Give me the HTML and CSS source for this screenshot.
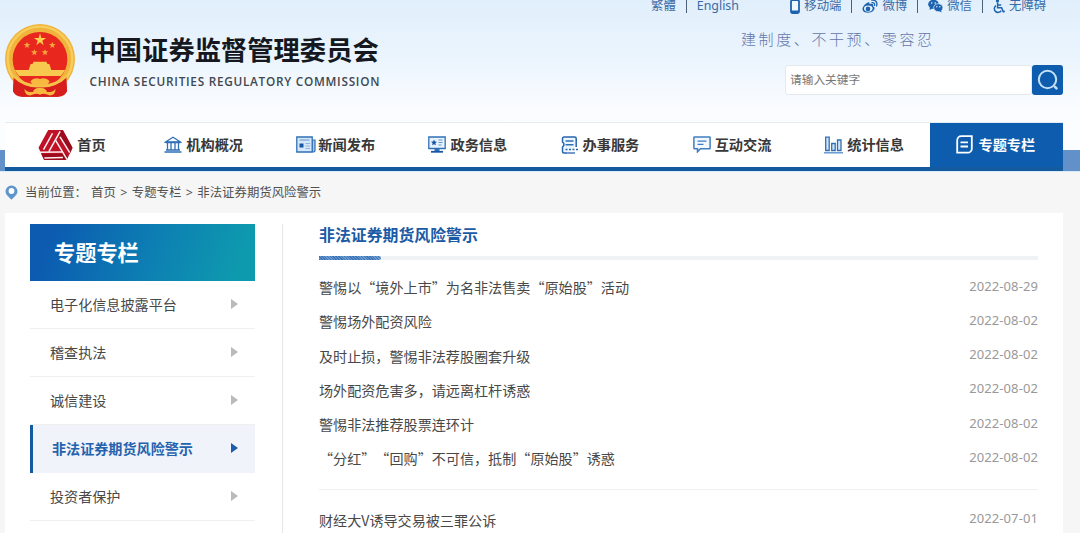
FILE: index.html
```html
<!DOCTYPE html>
<html lang="zh-CN">

<head>
    <meta charset="utf-8">
    <title>中国证券监督管理委员会</title>
    <link rel="stylesheet" href="styles.css">
</head>

<body>

    <div class="header">
        <div class="brand">
            <svg class="emblem" viewBox="0 0 210 222">
                <path d="M27 160 L24 203 L50 218 L160 218 L186 203 L183 160 Z" fill="#d61f1c"/>
                <circle cx="105" cy="105" r="105" fill="#f0b43c"/>
                <circle cx="105" cy="105" r="97" fill="none" stroke="#f8cd5b" stroke-width="7"/>
                <circle cx="105" cy="106" r="82" fill="#e8271f"/>
                <path d="M26 158 Q60 194 105 190 Q150 194 184 158 L186 200 Q182 216 160 218 L50 218 Q28 216 24 200 Z" fill="#d61f1c"/>
                <path d="M29 138 H181 L168 156 H42 Z M77 120 H133 L139 138 H71 Z M86 113 H124 L128 121 H82 Z" fill="#f7c94f"/>
                <path d="M105 28 L109 42 L123 42 L112 50 L116 64 L105 55 L94 64 L98 50 L87 42 L101 42 Z" fill="#f9cf4d"/>
                <path id="star" d="M66 54 L69 60 L76 60 L70 65 L72 72 L66 68 L60 72 L62 65 L56 60 L63 60 Z" fill="#f3a53b"/>
                <use href="#star" x="76"/>
                <use href="#star" x="22" y="22"/>
                <use href="#star" x="54" y="22"/>
                <path d="M26 156 Q55 186 105 186 Q155 186 184 156" fill="none" stroke="#f5c04a" stroke-width="8"/>
                <path d="M76 172 Q88 158 105 165 Q122 158 134 172 L126 184 H84 Z M58 194 Q66 206 84 204 Q88 190 105 192 Q122 190 126 204 Q144 206 152 194 Q150 216 132 214 Q118 206 105 212 Q92 206 78 214 Q60 216 58 194 Z" fill="#f7b93f"/>
            </svg>
            <div class="brand-text">
                <div class="brand-cn">中国证券监督管理委员会</div>
                <div class="brand-en">CHINA SECURITIES REGULATORY COMMISSION</div>
            </div>
        </div>
        <div class="tools">
            <div class="top-links">
                <a>繁體</a>
                <i class="bar"></i>
                <a class="english">English</a>
                <a>
                    <svg width="10" height="15" viewBox="0 0 10 15"><rect x="1" y="1" width="8" height="13" rx="1.5" fill="#eef6fe" stroke="#1c62ae" stroke-width="1.8"/><path d="M1 12.500h8" stroke="#1c62ae" stroke-width="2"/></svg>
                    移动端</a>
                <i class="bar"></i>
                <a>
                    <svg width="16" height="15" viewBox="0 0 16 15"><path d="M6 3.500C7.500 3 7.800 4 7.400 5.200C10 4.200 11.800 5 11 7.200C13 7.800 13 9.800 11.500 11.500C9 14.800 1 14.500 .5 10.500C.3 8 3 4.600 6 3.500Z" fill="#1c62ae"/><ellipse cx="6.300" cy="9.600" rx="4.300" ry="3.100" fill="#e9f3fd"/><circle cx="6" cy="9.900" r="2.300" fill="#1c62ae"/><path d="M9.800 1.200C13.500 .5 15.800 3.400 14.500 7M10 3.700C12 3.300 13 4.800 12.400 6.400" fill="none" stroke="#1c62ae" stroke-width="1.300" stroke-linecap="round"/></svg>
                    微博</a>
                <i class="bar"></i>
                <a>
                    <svg width="15" height="14" viewBox="0 0 15 14"><ellipse cx="5.500" cy="5.300" rx="5.300" ry="4.600" fill="#1c62ae"/><path d="M2 8l-.5 3 3-1.600z" fill="#1c62ae"/><ellipse cx="10.300" cy="8.700" rx="4.600" ry="4" fill="#1c62ae" stroke="#e9f3fd" stroke-width=".7"/><path d="M11 12l2.500 1.600-.4-2.600z" fill="#1c62ae"/><g fill="#e9f3fd"><circle cx="3.700" cy="4" r=".8"/><circle cx="7.200" cy="4" r=".8"/><circle cx="8.800" cy="7.700" r=".7"/><circle cx="11.800" cy="7.700" r=".7"/></g></svg>
                    微信</a>
                <i class="bar"></i>
                <a>
                    <svg width="12" height="15" viewBox="0 0 12 15"><circle cx="4.500" cy="1.900" r="1.600" fill="#1c62ae"/><path d="M4.600 3.500v5.300h4l1.700 4 1.500-.6M4.600 6h3.600M3 6.600a3.700 3.700 0 1 0 5.200 5" fill="none" stroke="#1c62ae" stroke-width="1.500"/></svg>
                    无障碍</a>
            </div>
            <div class="slogan">建制度、不干预、零容忍</div>
            <div class="search">
                <div class="search-input">请输入关键字</div>
                <div class="search-btn">
                    <svg width="22" height="22" viewBox="0 0 22 22"><circle cx="10.500" cy="10.500" r="8.700" fill="none" stroke="#c4e0f8" stroke-width="2"/><path d="M18 17.800l1.500 1.500" stroke="#c4e0f8" stroke-width="2.600" stroke-linecap="round"/></svg>
                </div>
            </div>
        </div>
    </div>

    <div class="nav-wrap">
        <div class="nav">
            <div class="nav-item home">
                <svg width="35" height="32" viewBox="0 0 104 96">
                    <path d="M30 3 H74 L103 56 L86 93 H18 L1 56 Z" fill="#c01226"/>
                    <path d="M74 3 L103 56 L95 74 L60 12 Z M18 93 L9 74 H86 L86 93 Z" fill="#9c0c1c"/>
                    <g fill="none" stroke="#fbeff0" stroke-width="4.500">
                        <path id="arm" d="M32 68 L66 7 M16 62 L43 13"/>
                        <use href="#arm" transform="rotate(120 52 57)"/>
                        <use href="#arm" transform="rotate(240 52 57)"/>
                    </g>
                </svg>
                首页
            </div>
            <div class="nav-item">
                <svg width="18" height="17" viewBox="0 0 18 17"><path d="M1.500 6L9 1.300 16.500 6z" fill="none" stroke="#2f70b5" stroke-width="1.300"/><path d="M1.500 6.500h15M3.500 7v7M7 7v7M11 7v7M14.500 7v7M2 14h14M.5 16h17" fill="none" stroke="#2f70b5" stroke-width="1.300"/></svg>
                机构概况
            </div>
            <div class="nav-item news">
                <svg width="20" height="17" viewBox="0 0 20 17"><path d="M16 4h3v10.500a1.500 1.500 0 0 1-3 0z" fill="#a9c8ea" stroke="#2f70b5" stroke-width="1.200"/><path d="M.8 1h15.400v15H.8z" fill="#d5e7f8" stroke="#2f70b5" stroke-width="1.300"/><path d="M3.500 4h10" stroke="#6095cd"/><path d="M3.500 7.500h4v4h-4z" fill="#1656a5"/><path d="M9.500 7.500h4.500M9.500 10h4.500M9.500 12.500h4.500" stroke="#8db4de"/></svg>
                新闻发布
            </div>
            <div class="nav-item">
                <svg width="18" height="17" viewBox="0 0 18 17"><path d="M.8 1h16.400v11.500H.8z" fill="#e8f2fc" stroke="#2f70b5" stroke-width="1.300"/><path d="M6 3.500l.9 2 2.100.2-1.600 1.500.5 2.100L6 8.200 4.100 9.300l.5-2.100L3 5.700l2.100-.2z" fill="#1656a5"/><path d="M10.500 4h4M10.500 6.500h4M10.500 9h3" stroke="#6095cd"/><path d="M6.500 13h5v2h-5z" fill="#2f70b5"/><path d="M3 15.800h12" stroke="#1656a5" stroke-width="1.800"/></svg>
                政务信息
            </div>
            <div class="nav-item">
                <svg width="18" height="18" viewBox="0 0 18 18"><path d="M15.200 11V2.500a1.500 1.500 0 0 0-1.500-1.500H3a1.500 1.500 0 0 0-1.500 1.500V6l1.300 1.500v2L1.500 11v4.500A1.500 1.500 0 0 0 3 17h3.500" fill="#edf5fd" stroke="#2864ae" stroke-width="1.500"/><path d="M4.500 5h8M4.500 8.700h8" stroke="#2f70b5" stroke-width="1.400"/><path d="M4.500 13.500h13" stroke="#2864ae" stroke-width="1.700" stroke-dasharray="2 1.500"/><path d="M6.500 17H14" stroke="#2864ae" stroke-width="1.300"/></svg>
                办事服务
            </div>
            <div class="nav-item">
                <svg width="18" height="17" viewBox="0 0 18 17"><path d="M1.500 1h15a.6.600 0 0 1 .6.600v10.600a.6.600 0 0 1-.6.600H7.500L4.500 15.800V12.800h-3a.6.600 0 0 1-.6-.6V1.600a.6.600 0 0 1 .6-.6z" fill="#f3f8fe" stroke="#3f7dc0" stroke-width="1.500"/><path d="M4.500 5.200h9M4.500 8.300h6" stroke="#3f7dc0" stroke-width="1.300"/></svg>
                互动交流
            </div>
            <div class="nav-item">
                <svg width="19" height="18" viewBox="0 0 19 18"><path d="M1.700 1.200h3.500v13.300H1.700zM7.700 7.500h3.500v7H7.700zM13.500 4h3.500v10.500h-3.500z" fill="#d3e6f7" stroke="#2f70b5" stroke-width="1.300"/><path d="M0 16.800h19" stroke="#5b92cc" stroke-width="1.400"/></svg>
                统计信息
            </div>
            <div class="nav-item active">
                <svg width="17" height="19" viewBox="0 0 17 19"><path d="M5.500 1.200h10.300v12.500c0 2-1.600 4-4.200 4H1.200V5.500c0-2.600 1.700-4.300 4.300-4.300z" fill="none" stroke="#fff" stroke-width="1.800"/><path d="M4.500 7.300h7.500M4.500 11.500h7.500" stroke="#fff" stroke-width="1.800"/></svg>
                专题专栏
            </div>
        </div>
    </div>

    <div class="crumbs">
        <svg width="13" height="15" viewBox="0 0 13 15"><path d="M6.500 .5a6 6 0 0 1 6 6c0 3-3.500 5.500-6 8.200C4 12 .5 9.500 .5 6.500a6 6 0 0 1 6-6z" fill="#5d95cc"/><circle cx="6.500" cy="6" r="2.900" fill="#fff"/></svg>
        <span class="where">当前位置：</span>
        <span>首页</span><b>&gt;</b><span>专题专栏</span><b>&gt;</b><span>非法证券期货风险警示</span>
    </div>

    <div class="content">
        <div class="side">
            <div class="side-title">专题专栏</div>
            <div class="side-item">电子化信息披露平台</div>
            <div class="side-item">稽查执法</div>
            <div class="side-item">诚信建设</div>
            <div class="side-item current">非法证券期货风险警示</div>
            <div class="side-item">投资者保护</div>
        </div>
        <div class="main">
            <div class="main-title">非法证券期货风险警示</div>
            <div class="rule"><div class="rule-mark"></div></div>
            <ul class="list">
                <li><span>警惕以“境外上市”为名非法售卖“原始股”活动</span><em>2022-08-29</em></li>
                <li><span>警惕场外配资风险</span><em>2022-08-02</em></li>
                <li><span>及时止损，警惕非法荐股圈套升级</span><em>2022-08-02</em></li>
                <li><span>场外配资危害多，请远离杠杆诱惑</span><em>2022-08-02</em></li>
                <li><span>警惕非法推荐股票连环计</span><em>2022-08-02</em></li>
                <li><span>“分红”“回购”不可信，抵制“原始股”诱惑</span><em>2022-08-02</em></li>
            </ul>
            <ul class="list second">
                <li><span>财经大V诱导交易被三罪公诉</span><em>2022-07-01</em></li>
            </ul>
        </div>
    </div>

</body>

</html>
```
FILE: styles.css
```css
* {
    box-sizing: border-box;
}

body {
    margin: 0;
    height: 533px;
    overflow: hidden;
    background: #f6f6f6;
    color: #484848;
    font-family: "Noto Sans", "Noto Sans CJK SC", sans-serif;
    font-size: 14.1px;
    text-spacing-trim: space-all;
}

svg {
    display: block;
    flex: none;
}

.header {
    display: flex;
    justify-content: space-between;
    height: 122px;
    padding: 0 17px 0 5px;
    background: linear-gradient(#e1effc, #eaf4fd 45%, #fafcff 88%, #fcfdff);
}

.brand {
    display: flex;
    padding-top: 24px;
}

.emblem {
    width: 70px;
    height: 74px;
}

.brand-text {
    margin-left: 14.5px;
    padding-top: 9px;
    white-space: nowrap;
}

.brand-cn {
    height: 32px;
    line-height: 32px;
    font-family: "Noto Sans CJK SC", sans-serif;
    font-size: 26.3px;
    font-weight: 700;
    color: #15191f;
}

.brand-en {
    margin-top: 7px;
    line-height: 18px;
    font-family: "Open Sans", sans-serif;
    font-size: 11.8px;
    font-weight: 600;
    letter-spacing: .72px;
    color: #414850;
}

.tools {
    width: 412px;
}

.top-links {
    display: flex;
    align-items: center;
    height: 18px;
    margin-top: -3px;
    font-size: 12.4px;
    line-height: 18px;
    color: #3a6ba6;
    white-space: nowrap;
}

.top-links a {
    display: flex;
    align-items: center;
    gap: 4px;
}

.top-links .bar {
    width: 1px;
    height: 13px;
    margin: 0 10px;
    background: #4a6078;
}

.top-links .english {
    width: 93.5px;
}

.slogan {
    margin: 13px 0 0 90px;
    line-height: 22px;
    font-family: "Noto Sans CJK SC", sans-serif;
    font-size: 15px;
    font-weight: 300;
    letter-spacing: 2.6px;
    color: #6476ac;
}

.search {
    display: flex;
    width: 278px;
    height: 30px;
    margin: 15px 0 0 134px;
}

.search-input {
    flex: 1;
    padding-left: 4px;
    border: 1px solid #e3e9ef;
    border-radius: 3px;
    background: #fff;
    font-size: 11.7px;
    line-height: 27px;
    color: #777;
}

.search-btn {
    display: flex;
    align-items: center;
    justify-content: center;
    width: 31px;
    border-radius: 3px;
    background: #0e5cad;
}

/* the blue strip shows on both sides of the nav */
.nav-wrap {
    height: 49px;
    padding: 0 17px 0 5px;
    background: linear-gradient(#fcfdff 28px, #6290c8 28px);
}

.nav {
    display: flex;
    height: 49px;
    border-top: 1px solid #e3ebf3;
    border-bottom: 4px solid #135a9f;
    background: #fff;
}

.nav-item {
    display: flex;
    width: 132.1px;
    align-items: center;
    justify-content: center;
    gap: 4px;
    padding: 0 0 1px 1px;
    font-size: 14.2px;
    font-weight: 700;
    line-height: 20px;
    color: #383838;
    white-space: nowrap;
}

.nav-item.news {
    gap: 2px;
}

.nav-item.home {
    padding-left: 2px;
}

.nav-item.active {
    flex: 1;
    gap: 5px;
    padding: 0 1px 1px 0;
    background: #0e5cad;
    color: #fff;
}

.crumbs {
    display: flex;
    align-items: center;
    height: 42px;
    padding-left: 5px;
    font-size: 12.4px;
    line-height: 18px;
    border-top: 1px solid #d8eafa;
    color: #505050;
}

.crumbs .where {
    width: 66px;
    margin-left: 7px;
}

.crumbs b {
    width: 16px;
    font-weight: 400;
    text-align: center;
}

.content {
    display: flex;
    height: 320px;
    margin: 0 17px 0 5px;
    padding-top: 11px;
    background: #fff;
}

.side {
    width: 278px;
    padding: 0 27px 0 25px;
    border-right: 1px solid #e4e7e9;
}

.side-title {
    height: 57px;
    padding-left: 24px;
    background: linear-gradient(110deg, #0c5bb0 10%, #0d80b3 55%, #0e9aae 92%);
    font-size: 21.2px;
    font-weight: 700;
    line-height: 57px;
    color: #fff;
}

.side-item {
    display: flex;
    align-items: center;
    justify-content: space-between;
    height: 48px;
    padding: 0 17.5px 2px 20px;
    border-bottom: 1px solid #f0f0f0;
}

.side-item::after {
    content: "";
    border: 5px solid transparent;
    border-left: 7px solid #b9b9b9;
    border-right: 0;
}

.side-item.current {
    border-left: 3px solid #135a9f;
    border-bottom: 0;
    padding-left: 19px;
    background: #f0f4fa;
    font-weight: 700;
    color: #2462ae;
}

.side-item.current::after {
    border-left-color: #1c5dab;
}

.main {
    flex: 1;
    padding: 0 25px 0 36px;
}

.main-title {
    height: 32px;
    font-size: 15.9px;
    font-weight: 700;
    line-height: 23px;
    color: #1b5ba6;
}

.rule {
    height: 4px;
    background: #eff3f5;
}

.rule-mark {
    width: 62px;
    height: 4px;
    border-radius: 0 2px 2px 0;
    background: repeating-linear-gradient(45deg, #3a74b8 0 1px, #6f9bce 1px 2px);
}

.list {
    margin: 10px 0 0;
    padding: 0;
    list-style: none;
}

.list li {
    display: flex;
    justify-content: space-between;
    height: 34.3px;
    line-height: 34.3px;
    white-space: nowrap;
}

.list span {
    font-family: "Noto Sans CJK SC", sans-serif;
}

.list em {
    margin-top: -1.5px;
    font-size: 13px;
    font-style: normal;
    letter-spacing: .1px;
    color: #999;
}

.list.second {
    margin-top: 13px;
    padding-top: 13px;
    border-top: 1px solid #f0f0f0;
}

.list.second li {
    height: 29px;
}
```
